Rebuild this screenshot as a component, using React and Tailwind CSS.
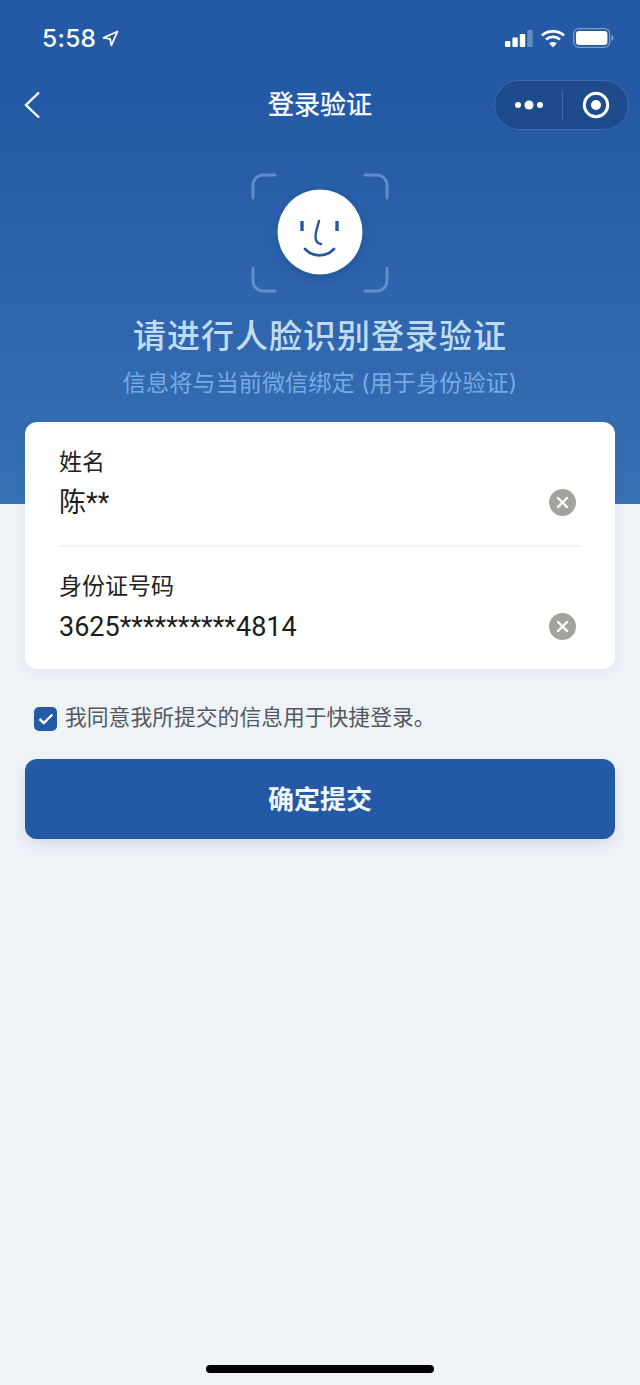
import React from "react";

function Clear() {
  return (
    <svg width="27" height="27" viewBox="0 0 27 27" className="shrink-0">
      <circle cx="13.5" cy="13.5" r="13.5" fill="#a3a39e" />
      <path d="M9 9l9 9M18 9l-9 9" stroke="#fff" strokeWidth="2.4" strokeLinecap="round" />
    </svg>
  );
}

function Field({ label, value }) {
  return (
    <div className="flex flex-col">
      <div className="text-[23px] leading-[32px] text-[#222]">{label}</div>
      <div className="mt-[6px] flex items-center justify-between pr-[5px]">
        <div className="translate-y-[1px] font-['Roboto','Noto_Sans_CJK_SC',sans-serif] text-[27px] leading-[36px] text-[#1c1c1c]">{value}</div>
        <Clear />
      </div>
    </div>
  );
}

export default function App() {
  return (
    <div className="relative flex min-h-[1385px] w-[640px] flex-col overflow-hidden bg-[#eef3f7] font-['Inter','Noto_Sans_CJK_SC',sans-serif]">
      <div className="flex h-[504px] flex-col bg-gradient-to-b from-[#2459a5] from-[20%] to-[#3870b4]">
        {/* status bar */}
        <div className="flex h-[76px] items-center justify-between pl-[42px] pr-[26px]">
          <div className="flex items-center gap-[6px] text-white">
            <span className="text-[24.5px] font-medium leading-none tracking-[0.3px]">5:58</span>
            <svg width="17" height="17" viewBox="0 0 17 17" fill="none">
              <path d="M15.5 1.5L1.5 7.8l6.6 1 1.2 6.6z" stroke="#fff" strokeWidth="1.8" strokeLinejoin="round" />
            </svg>
          </div>
          <div className="flex items-center gap-[7px]">
            <svg width="28" height="19" viewBox="0 0 28 19">
              <rect x="0" y="12" width="5.4" height="6" rx="1" fill="#fff" />
              <rect x="7.4" y="8.5" width="5.4" height="9.5" rx="1" fill="#fff" />
              <rect x="14.8" y="5" width="5.4" height="13" rx="1" fill="#fff" />
              <rect x="22.2" y="1" width="5.4" height="17" rx="1" fill="#fff" fillOpacity="0.3" />
            </svg>
            <svg width="26" height="19" viewBox="0 0 25 19" fill="none">
              <path d="M1.5 6.5C7.5 1 17.5 1 23.5 6.5" stroke="#fff" strokeWidth="2.8" />
              <path d="M5.5 10.5C9.5 7 15.5 7 19.5 10.5" stroke="#fff" strokeWidth="2.8" />
              <path d="M12.5 18.5l-3.8-4.2c2-1.8 5.6-1.8 7.6 0z" fill="#fff" />
            </svg>
            <svg width="41" height="20" viewBox="0 0 41 20">
              <rect x="0.7" y="0.7" width="36" height="18.6" rx="5" fill="none" stroke="#fff" strokeOpacity="0.4" strokeWidth="1.3" />
              <rect x="3" y="3" width="31.4" height="14" rx="3" fill="#fff" />
              <path d="M38.5 7v6c1.3-.5 2-1.7 2-3s-.7-2.5-2-3z" fill="#fff" fillOpacity="0.45" />
            </svg>
          </div>
        </div>

        {/* nav */}
        <div className="relative flex h-[58px] items-center justify-center">
          <svg className="absolute left-[24px] top-[15px]" width="17" height="28" viewBox="0 0 17 28" fill="none">
            <path d="M15 1.5L2 14l13 12.5" stroke="#fff" strokeWidth="2.4" />
          </svg>
          <div className="text-[26px] leading-none text-white [-webkit-text-stroke:0.3px_#fff]">登录验证</div>
          <div className="absolute left-[494px] top-[4px] flex h-[50px] w-[135px] items-center rounded-full border border-[#3a6cae] bg-[#1d4b8b]">
            <div className="flex w-[67px] items-center justify-center">
              <svg width="30" height="12" viewBox="0 0 30 12">
                <circle cx="4" cy="6" r="3" fill="#fff" />
                <circle cx="15" cy="6" r="4.5" fill="#fff" />
                <circle cx="26" cy="6" r="3" fill="#fff" />
              </svg>
            </div>
            <div className="h-[30px] w-px bg-[#3a6cae]" />
            <div className="flex flex-1 items-center justify-center">
              <svg width="28" height="28" viewBox="0 0 28 28" fill="none">
                <circle cx="14" cy="14" r="11.7" stroke="#fff" strokeWidth="3" />
                <circle cx="14" cy="14" r="5" fill="#fff" />
              </svg>
            </div>
          </div>
        </div>

        {/* face */}
        <div className="mt-[38px] flex justify-center">
          <svg width="138" height="122" viewBox="0 0 138 122" fill="none">
            <defs>
              <filter id="faceShadow" x="-30%" y="-30%" width="160%" height="160%">
                <feGaussianBlur stdDeviation="5" />
              </filter>
            </defs>
            <g stroke="#5f8fc8" strokeWidth="3" strokeLinecap="round">
              <path d="M2 26V13C2 7.5 6.5 3 12 3h12" />
              <path d="M114 3h12c5.5 0 10 4.5 10 10v13" />
              <path d="M2 96v13c0 5.5 4.5 10 10 10h12" />
              <path d="M136 96v13c0 5.5-4.5 10-10 10h-12" />
            </g>
            <circle cx="69" cy="64" r="42.5" fill="#123a75" fillOpacity="0.3" filter="url(#faceShadow)" />
            <circle cx="69" cy="60" r="42.5" fill="#fff" />
            <g stroke="#25599f" strokeLinecap="round">
              <path d="M51 49v10M86 49v10" strokeWidth="3.4" strokeLinecap="butt" />
              <path d="M68 49c-1.5 6-3.500 11-3.500 16 0 4 2.500 6.500 5.500 7" strokeWidth="2.4" />
              <path d="M54 77c8 8.500 21 8.500 29 0" strokeWidth="2.8" />
            </g>
          </svg>
        </div>

        <div className="mt-[21px] text-center text-[33px] font-medium leading-[42px] tracking-[1px] text-[#c0dcf3]">
          请进行人脸识别登录验证
        </div>
        <div className="mt-[10px] text-center text-[23.2px] leading-[32px] text-[#74abe2]">
          信息将与当前微信绑定 (用于身份验证)
        </div>
      </div>

      {/* form card */}
      <div className="mx-[25px] -mt-[82px] flex h-[247px] flex-col rounded-[12px] bg-white px-[34px] pt-[24px] shadow-[0_4px_12px_rgba(60,90,130,0.08)]">
        <Field label="姓名" value="陈**" />
        <div className="mb-[23px] mt-[25px] h-[2px] bg-[#f1f3f5]" />
        <Field label="身份证号码" value="3625**********4814" />
      </div>

      {/* agreement */}
      <div className="ml-[34px] mt-[34px] flex items-start gap-[8px]">
        <div className="mt-[4px] flex h-[24px] w-[23px] items-center justify-center rounded-[5px] bg-[#2459a5]">
          <svg width="16" height="12" viewBox="0 0 16 12" fill="none">
            <path d="M1.5 6l4.3 4 8.500-8.500" stroke="#fff" strokeWidth="2.4" />
          </svg>
        </div>
        <div className="text-[21.8px] leading-[28px] text-[#55595f]">我同意我所提交的信息用于快捷登录。</div>
      </div>

      {/* submit */}
      <div className="mx-[25px] mt-[28px] flex h-[80px] items-center justify-center rounded-[12px] bg-[#2459a5] text-[26px] font-bold text-[#eef6fb] shadow-[0_6px_14px_rgba(60,90,130,0.14)]">
        确定提交
      </div>

      <div className="mt-[526px] flex justify-center">
        <div className="h-[8px] w-[228px] rounded-full bg-black" />
      </div>
    </div>
  );
}
